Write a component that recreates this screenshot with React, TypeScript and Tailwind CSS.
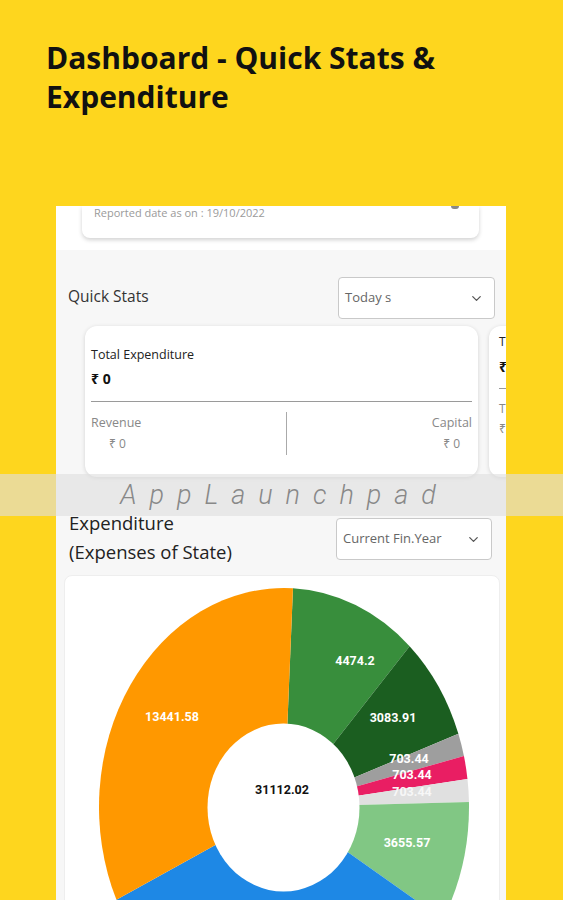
import { ChevronDown } from "lucide-react";

const APP_FONT = { fontFamily: '"Open Sans", "Noto Sans", sans-serif' };

// chart geometry, in chart-card coordinates
const CX = 219;
const CY = 231;
const RX = 185;
const RY = 219;

const SLICES = [
  { color: "#388E3C", from: [9, -219], to: [125, -160] },
  { color: "#1B5E20", from: [125, -160], to: [174, -73] },
  { color: "#9E9E9E", from: [174, -73], to: [180, -51] },
  { color: "#E91E63", from: [180, -51], to: [183, -28] },
  { color: "#E0E0E0", from: [183, -28], to: [184, -5] },
  { color: "#81C784", from: [184, -5], to: [130, 92] },
  { color: "#1E88E5", from: [130, 92], to: [-166, 92] },
  { color: "#FF9800", from: [-166, 92], to: [9, -219] },
];

const LABELS = [
  { text: "4474.2", x: 290, y: 86, fill: "#fff" },
  { text: "3083.91", x: 328, y: 143, fill: "#fff" },
  { text: "703.44", x: 344, y: 184, fill: "#fff" },
  { text: "703.44", x: 347, y: 200, fill: "#fff" },
  { text: "703.44", x: 347, y: 217, fill: "#f7f7f7" },
  { text: "3655.57", x: 342, y: 268, fill: "#fff" },
  { text: "13441.58", x: 107, y: 142, fill: "#fff" },
];

const onEdge = ([dx, dy]: number[]) => {
  const k = 1 / Math.sqrt((dx / RX) ** 2 + (dy / RY) ** 2);
  return [CX + dx * k, CY + dy * k];
};

const slicePath = (from: number[], to: number[]) => {
  const [x1, y1] = onEdge(from);
  const [x2, y2] = onEdge(to);
  let a = Math.atan2(to[1], to[0]) - Math.atan2(from[1], from[0]);
  if (a < 0) a += Math.PI * 2;
  const large = a > Math.PI ? 1 : 0;
  return `M${CX} ${CY} L${x1} ${y1} A${RX} ${RY} 0 ${large} 1 ${x2} ${y2} Z`;
};

const Dropdown = ({ label, width }: { label: string; width: string }) => (
  <div className={`flex h-[42px] ${width} items-center justify-between rounded-[4px] border border-[#c9c9c9] bg-white pl-[6px] pr-[10px]`}>
    <span className="text-[13px] text-[#666]">{label}</span>
    <ChevronDown size={15} strokeWidth={2} className="text-[#555]" />
  </div>
);

const App = () => {
  return (
    <div className="relative h-[900px] w-[563px] overflow-hidden bg-[#FED61E]">
      {/* --- Title --- */}
      <h1
        className="pl-[46px] pt-[38px] text-[30px] font-bold leading-[39px] text-[#111]"
        style={{ fontFamily: '"Open Sans", sans-serif' }}
      >
        Dashboard - Quick Stats &amp;
        <br />
        Expenditure
      </h1>

      {/* --- Phone screen --- */}
      <div className="ml-[56px] mt-[90px] h-[694px] w-[450px] overflow-hidden bg-[#f7f7f7]" style={APP_FONT}>
        <div className="h-[44px] bg-white pl-[26px]">
          <div className="relative h-[32px] w-[397px] rounded-b-[8px] bg-white pl-[12px] shadow-[0_2px_4px_rgba(0,0,0,0.18)]">
            <span className="block text-[11px] leading-[14px] text-[#9a9a9a]">Reported date as on : 19/10/2022</span>
            <span className="absolute right-[20px] top-0 h-[3px] w-[8px] rounded-b-full bg-[#888]" />
          </div>
        </div>

        {/* Quick stats header */}
        <div className="flex items-center justify-between pl-[12px] pr-[11px] pt-[27px]">
          <span className="-mt-[3px] text-[15.5px] text-[#333]">Quick Stats</span>
          <Dropdown label="Today s" width="w-[157px]" />
        </div>

        {/* Stat cards */}
        <div className="mt-[7px] flex gap-[11px] pl-[29px]">
          <div className="h-[151px] w-[393px] shrink-0 rounded-[12px] bg-white px-[6px] pt-[21px] shadow-[0_1px_4px_rgba(0,0,0,0.15)]">
            <div className="text-[12.5px] leading-[16px] text-[#222]">Total Expenditure</div>
            <div className="mt-[7px] text-[14px] font-bold leading-[18px] text-[#111]">₹ 0</div>
            <div className="mt-[13px] h-px bg-[#9a9a9a]" />
            <div className="flex pt-[10px]">
              <div className="w-[195px] pt-[3px]">
                <div className="text-[12.5px] leading-[16px] text-[#888]">Revenue</div>
                <div className="mt-[5px] pl-[18px] text-[12px] leading-[16px] text-[#888]">₹ 0</div>
              </div>
              <div className="h-[43px] w-px bg-[#aaa]" />
              <div className="flex flex-1 flex-col items-end pt-[3px]">
                <div className="text-[12.5px] leading-[16px] text-[#888]">Capital</div>
                <div className="mt-[5px] pr-[12px] text-[12px] leading-[16px] text-[#888]">₹ 0</div>
              </div>
            </div>
          </div>
          <div className="h-[151px] w-[393px] shrink-0 rounded-[12px] bg-white px-[10px] pt-[8px] shadow-[0_1px_4px_rgba(0,0,0,0.15)]">
            <div className="text-[12px] leading-[16px] text-[#222]">T</div>
            <div className="mt-[8px] text-[14px] font-bold leading-[18px] text-[#111]">₹</div>
            <div className="mt-[12px] h-px w-[20px] bg-[#9a9a9a]" />
            <div className="pt-[12px] text-[12px] leading-[16px] text-[#888]">T</div>
            <div className="mt-[4px] text-[12px] leading-[16px] text-[#888]">₹</div>
          </div>
        </div>

        {/* Expenditure header */}
        <div className="mt-[31px] flex items-start justify-between pl-[13px] pr-[14px]">
          <div className="text-[18.5px] leading-[29px] text-[#222]">
            Expenditure
            <br />
            (Expenses of State)
          </div>
          <div className="mt-[10px]">
            <Dropdown label="Current Fin.Year" width="w-[156px]" />
          </div>
        </div>

        {/* Chart card */}
        <div className="ml-[8px] mt-[9px] h-[340px] w-[436px] rounded-[8px] border border-[#eee] bg-white">
          <svg width="436" height="340" viewBox="0 0 436 340">
            {SLICES.map((s, i) => (
              <path key={i} d={slicePath(s.from, s.to)} fill={s.color} />
            ))}
            <ellipse cx={218.5} cy={231.5} rx={76} ry={84} fill="#fff" />
            {LABELS.map((l, i) => (
              <text
                key={i}
                x={l.x}
                y={l.y}
                fill={l.fill}
                fontSize="12.5"
                fontWeight="700"
                textAnchor="middle"
                dominantBaseline="middle"
                style={{ fontFamily: "Roboto, sans-serif" }}
              >
                {l.text}
              </text>
            ))}
            <text
              x={217}
              y={215}
              fill="#111"
              fontSize="12.5"
              fontWeight="700"
              textAnchor="middle"
              dominantBaseline="middle"
              style={{ fontFamily: "Roboto, sans-serif" }}
            >
              31112.02
            </text>
          </svg>
        </div>
      </div>

      {/* --- Watermark band --- */}
      <div className="absolute left-0 top-[474px] flex h-[42px] w-full items-center justify-center bg-[rgba(222,222,222,0.62)]">
        <span
          className="pl-[6px] text-[27px] italic tracking-[0.48em] text-[#888]"
          style={{ fontFamily: "Roboto, sans-serif", fontWeight: 300 }}
        >
          AppLaunchpad
        </span>
      </div>
    </div>
  );
};

export default App;
